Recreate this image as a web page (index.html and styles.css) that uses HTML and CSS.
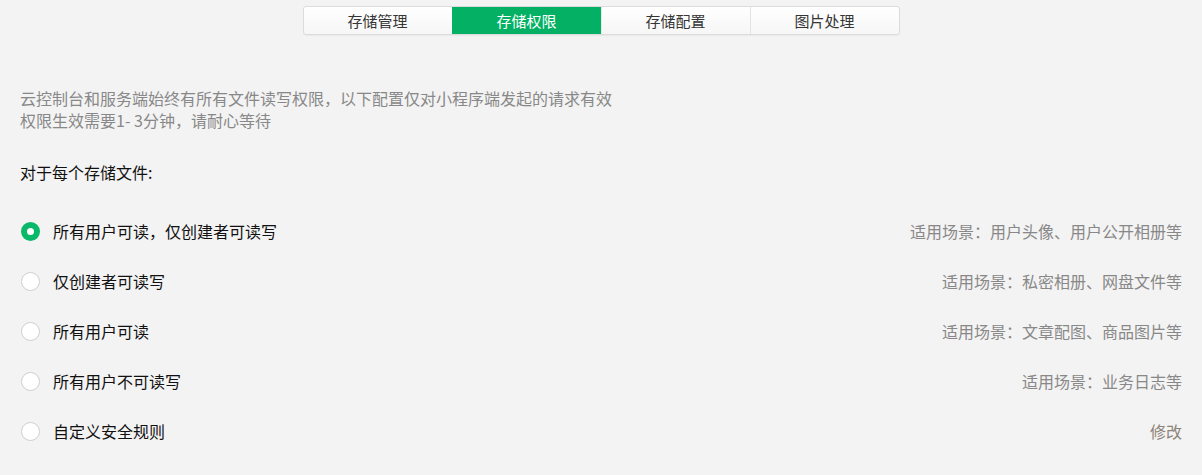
FILE: index.html
```html
<!DOCTYPE html>
<html lang="zh-CN">
<head>
  <meta charset="UTF-8" />
  <title>存储权限</title>
  <link rel="stylesheet" href="styles.css">
</head>
<body>

<div class="tabs">
  <a class="tab">存储管理</a>
  <a class="tab active">存储权限</a>
  <a class="tab">存储配置</a>
  <a class="tab">图片处理</a>
</div>

<div class="content">
  <p class="desc">
    云控制台和服务端始终有所有文件读写权限，以下配置仅对小程序端发起的请求有效<br>
    权限生效需要1- 3分钟，请耐心等待
  </p>

  <p class="title">对于每个存储文件:</p>

  <!-- 权限选项 -->
  <ul class="options">
    <li class="option">
      <span class="radio checked"></span>
      <span class="label">所有用户可读，仅创建者可读写</span>
      <span class="scene">适用场景：用户头像、用户公开相册等</span>
    </li>
    <li class="option">
      <span class="radio"></span>
      <span class="label">仅创建者可读写</span>
      <span class="scene">适用场景：私密相册、网盘文件等</span>
    </li>
    <li class="option">
      <span class="radio"></span>
      <span class="label">所有用户可读</span>
      <span class="scene">适用场景：文章配图、商品图片等</span>
    </li>
    <li class="option">
      <span class="radio"></span>
      <span class="label">所有用户不可读写</span>
      <span class="scene">适用场景：业务日志等</span>
    </li>
    <li class="option">
      <span class="radio"></span>
      <span class="label">自定义安全规则</span>
      <a class="scene edit">修改</a>
    </li>
  </ul>
</div>

</body>
</html>
```

FILE: styles.css
```css
* {
  box-sizing: border-box;
}

body {
  margin: 0;
  background: #f3f3f3;
  font-family: "Noto Sans CJK SC", "Liberation Sans", sans-serif;
  font-size: 16px;
  color: #222;
}

/* 顶部标签 */
.tabs {
  display: flex;
  width: 597px;
  margin: 6px auto 0;
  border: 1px solid #dcdcdc;
  border-radius: 3px;
  background: linear-gradient(#ffffff, #f6f6f6);
  box-shadow: 0 1px 1px rgba(0, 0, 0, 0.04);
}

.tab {
  flex: 1;
  height: 27px;
  line-height: 27px;
  font-size: 15px;
  text-align: center;
  color: #353535;
  cursor: pointer;
  border-left: 1px solid #e3e3e3;
}

.tab:first-child {
  border-left: none;
}

.tab.active {
  background: #03b064;
  color: #fff;
  border-left-color: #03b064;
}

.tab.active + .tab {
  border-left-color: #e8e8e8;
}

.content {
  padding: 0 20px;
}

.desc {
  margin: 52px 0 0;
  line-height: 22px;
  color: #888;
}

.title {
  margin: 30px 0 0;
  line-height: 22px;
  color: #111;
}

/* 选项列表 */
.options {
  list-style: none;
  margin: 23px 0 0;
  padding: 0;
}

.option {
  display: flex;
  align-items: center;
  height: 50px;
}

.radio {
  width: 19px;
  height: 19px;
  margin-left: 1px;
  margin-right: 13px;
  border: 1px solid #cfcfcf;
  border-radius: 50%;
  background: #fff;
}

.radio.checked {
  border: 6px solid #0ab86a;
}

.label {
  flex: 1;
  color: #111;
}

.scene {
  color: #888;
}

.edit {
  color: #8d8478;
  cursor: pointer;
}
```
